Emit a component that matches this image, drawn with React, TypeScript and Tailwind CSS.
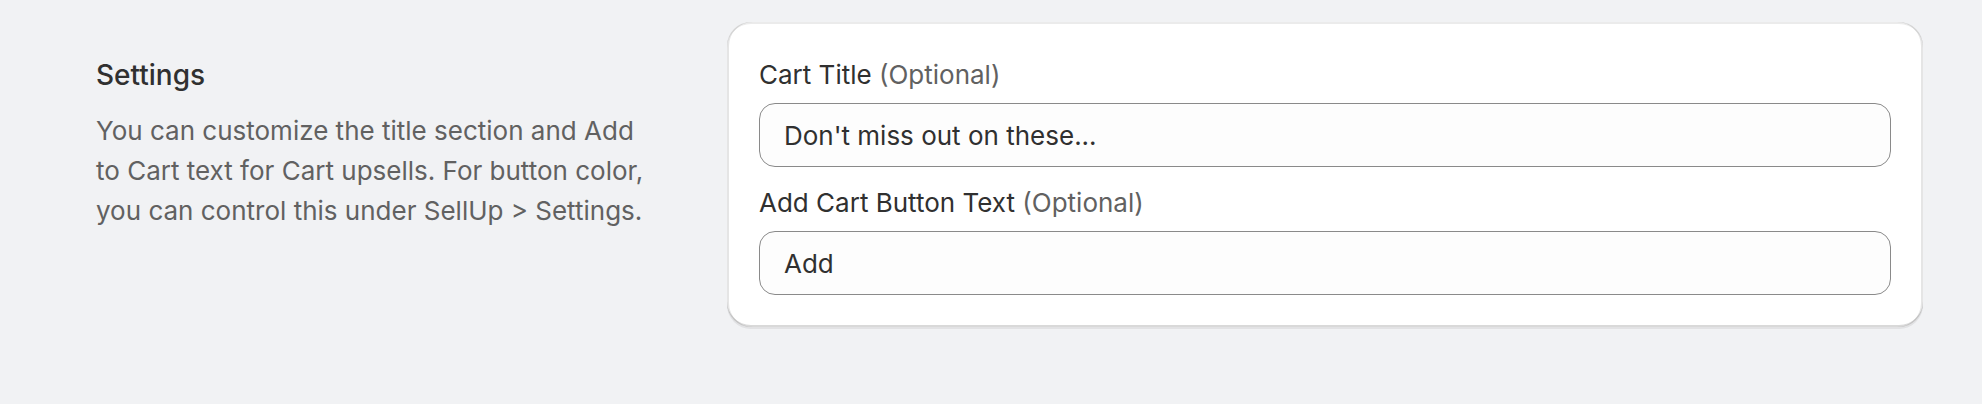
import { useState } from 'react';

function Field({ label, value, onChange }: { label: string; value: string; onChange: (v: string) => void }) {
  return (
    <div className="flex flex-col gap-[8px]">
      <label className="pt-[1px] text-[26px] leading-[40px] text-[#303030]">
        {label} <span className="text-[#616161]">(Optional)</span>
      </label>
      <input
        value={value}
        onChange={e => onChange(e.target.value)}
        className="h-[64px] w-full rounded-[16px] border border-[#8a8a8a] bg-[#fdfdfd] px-[24px] text-[26px] text-[#303030] outline-none"
      />
    </div>
  );
}

export default function App() {
  const [title, setTitle] = useState("Don't miss out on these...");
  const [buttonText, setButtonText] = useState('Add');

  return (
    <div className="min-h-screen bg-[#f1f2f4] font-[Inter,sans-serif] antialiased">
      <div className="flex items-start gap-[40px] pl-[96px] pr-[59px] pt-[22px]">
        {/* Annotation */}
        <div className="w-[591px] shrink-0 pt-[33px]">
          <h2 className="text-[28px] font-medium leading-[40px] text-[#303030]">Settings</h2>
          <p className="mt-[16px] max-w-[565px] text-[26px] leading-[40px] text-[#616161]">
            You can customize the title section and Add to Cart text for Cart upsells. For button color, you can
            control this under SellUp &gt; Settings.
          </p>
        </div>

        {/* Card */}
        <div className="flex flex-1 flex-col gap-[15px] rounded-[24px] bg-white p-[32px] shadow-[inset_2px_0_0_0_rgba(0,0,0,0.10),inset_-2px_0_0_0_rgba(0,0,0,0.10),inset_0_-2px_0_0_rgba(0,0,0,0.15),inset_0_2px_0_0_rgba(204,204,204,0.4),0_2px_0_0_rgba(26,26,26,0.07)]">
          <Field label="Cart Title" value={title} onChange={setTitle} />
          <Field label="Add Cart Button Text" value={buttonText} onChange={setButtonText} />
        </div>
      </div>
    </div>
  );
}
